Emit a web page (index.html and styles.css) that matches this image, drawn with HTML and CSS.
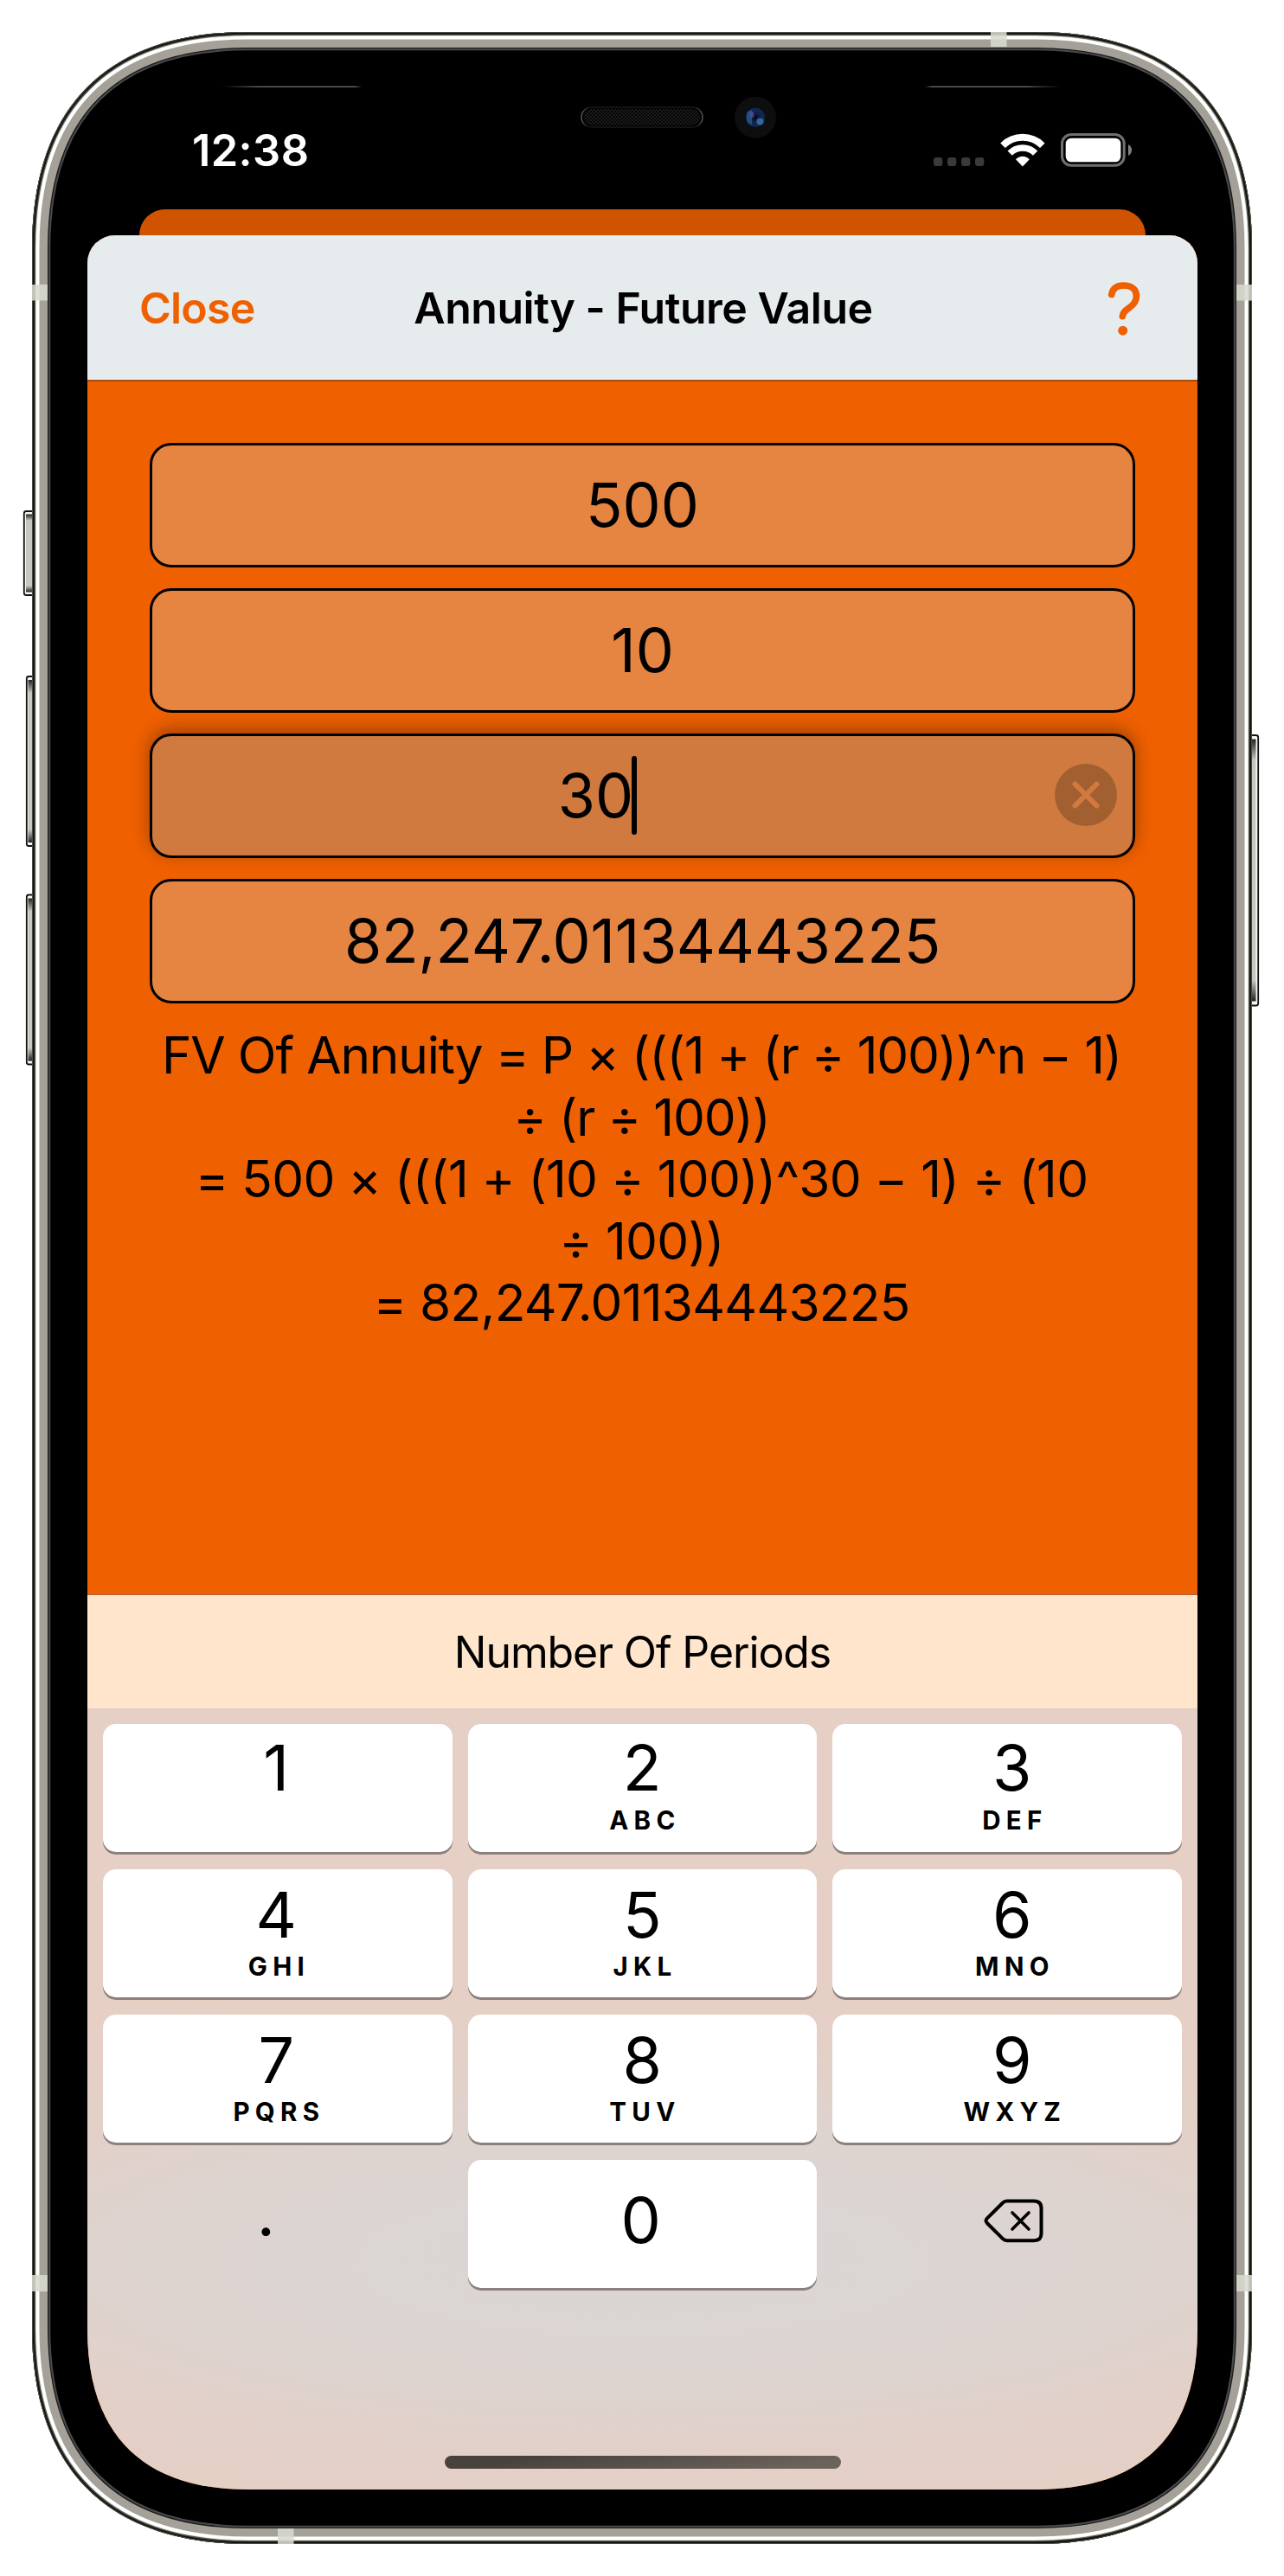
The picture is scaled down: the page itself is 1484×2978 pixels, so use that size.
FILE: index.html
```html
<!DOCTYPE html>
<html lang="en">
<head>
<meta charset="utf-8">
<title>Annuity - Future Value</title>
<link rel="stylesheet" href="styles.css">
</head>
<body>
<main class="phone">
  <svg class="frame" width="1484" height="2978" viewBox="0 0 1484 2978" aria-hidden="true">
    <defs>
      <path id="shell" d="M287 37H1197C1360 37 1447 124 1447 287V2691C1447 2854 1360 2941 1197 2941H287C124 2941 37 2854 37 2691V287C37 124 124 37 287 37Z"/>
      <clipPath id="shell-clip"><use href="#shell"/></clipPath>
      <linearGradient id="btn" x1="0" y1="0" x2="0" y2="1">
        <stop offset="0" stop-color="#222"/><stop offset=".08" stop-color="#c8c6c0"/>
        <stop offset=".92" stop-color="#c8c6c0"/><stop offset="1" stop-color="#222"/>
      </linearGradient>
      <linearGradient id="lineL"><stop offset="0" stop-color="#000"/><stop offset=".25" stop-color="#777"/><stop offset=".95" stop-color="#777"/><stop offset="1" stop-color="#000"/></linearGradient>
      <linearGradient id="lineR"><stop offset="0" stop-color="#000"/><stop offset=".05" stop-color="#777"/><stop offset=".75" stop-color="#777"/><stop offset="1" stop-color="#000"/></linearGradient>
      <linearGradient id="rim"><stop offset="0" stop-color="#666"/><stop offset=".06" stop-color="#181818"/><stop offset=".94" stop-color="#181818"/><stop offset="1" stop-color="#666"/></linearGradient>
      <pattern id="mesh" width="4" height="4" patternUnits="userSpaceOnUse"><rect width="4" height="4" fill="#050505"/><circle cx="1" cy="1" r=".9" fill="#262626"/><circle cx="3" cy="3" r=".9" fill="#262626"/></pattern>
      <radialGradient id="lens"><stop offset="0" stop-color="#050816"/><stop offset=".45" stop-color="#10224e"/><stop offset=".8" stop-color="#12294f"/><stop offset="1" stop-color="#04060a"/></radialGradient>
    </defs>
    <g stroke="#111" stroke-width="1.8" fill="#f4f6f0">
      <rect x="27.800" y="591" width="14" height="97" rx="2.500"/>
      <rect x="30.800" y="782" width="12" height="196" rx="2.500"/>
      <rect x="30.800" y="1034.500" width="12" height="196" rx="2.500"/>
      <rect x="1442" y="850" width="12.200" height="312.500" rx="2.500"/>
    </g>
    <g fill="url(#btn)">
      <rect x="30" y="594.500" width="9" height="90"/>
      <rect x="32.500" y="786" width="7" height="188"/>
      <rect x="32.500" y="1038.500" width="7" height="188"/>
      <rect x="1445" y="854.500" width="6.500" height="303"/>
    </g>
    <use href="#shell" fill="#000"/>
    <g clip-path="url(#shell-clip)" fill="none">
      <use href="#shell" stroke="#4a4a4c" stroke-width="42.500"/>
      <use href="#shell" stroke="#1c1c1c" stroke-width="38.500"/>
      <use href="#shell" stroke="#a5a199" stroke-width="36"/>
      <use href="#shell" stroke="#fff" stroke-width="17"/>
      <use href="#shell" stroke="#d5d6cf" stroke-width="9.500"/>
      <use href="#shell" stroke="#55554f" stroke-width="8"/>
      <use href="#shell" stroke="#15150f" stroke-width="5.500"/>
      <use href="#shell" stroke="#5c5b55" stroke-width="1.500"/>
    </g>
    <g fill="#d8d9ce" opacity=".88">
      <rect x="37" y="329" width="18" height="18.500"/><rect x="1429" y="329" width="18" height="18.500"/>
      <rect x="37" y="2630" width="18" height="19"/><rect x="1429" y="2630" width="18" height="19"/>
      <rect x="1145" y="37" width="18.500" height="17"/><rect x="321" y="2923" width="18.500" height="18"/>
    </g>
    <rect x="258" y="99.700" width="160" height="1.200" fill="url(#lineL)"/>
    <rect x="1069" y="99.700" width="157" height="1.200" fill="url(#lineR)"/>
    <rect x="672" y="124" width="140" height="23" rx="11.500" fill="#020202" stroke="url(#rim)" stroke-width="1.300"/>
    <rect x="675" y="126" width="134" height="19" rx="9.500" fill="url(#mesh)"/>
    <circle cx="873" cy="135.700" r="24" fill="#0e0e0e"/>
    <circle cx="873" cy="135.700" r="12.500" fill="url(#lens)"/>
    <path d="M864 129Q861 136 865 143L869 144V127Z" fill="#24598c" opacity=".8"/>
    <ellipse cx="869" cy="132.500" rx="2.500" ry="3.500" fill="#5b4a9a" opacity=".8"/>
    <ellipse cx="878.500" cy="140.500" rx="4" ry="4" fill="#3a78ad" opacity=".8"/>
  </svg>

  <div class="screen">
    <header class="status">
      <span class="time">12:38</span>
      <svg class="status-icons" width="230" height="44" viewBox="0 0 230 44" aria-label="Wi-Fi connected, battery full">
        <g fill="#3a3a3a"><rect x="0" y="30" width="10.300" height="10" rx="3"/><rect x="16" y="30" width="10.300" height="10" rx="3"/><rect x="32" y="30" width="10.300" height="10" rx="3"/><rect x="48" y="30" width="10.300" height="10" rx="3"/></g>
        <g fill="none" stroke="#fff">
          <path stroke-width="7.800" d="M80 16.200A32.500 32.500 0 0 1 125.800 16.200"/>
          <path stroke-width="7.500" d="M88.200 25.200A20.500 20.500 0 0 1 117.600 25.200"/>
        </g>
        <path fill="#fff" d="M102.900 40.400L95 32.300A10.500 10.500 0 0 1 110.800 32.300Z"/>
        <rect x="148.500" y="3.500" width="71.700" height="35.700" rx="10.500" fill="none" stroke="#707070" stroke-width="3"/>
        <rect x="152.700" y="7.700" width="63.600" height="27.600" rx="6.500" fill="#fff"/>
        <path fill="#808080" d="M225 15Q229 17.500 229 21.500T225 28Z"/>
      </svg>
    </header>
    <div class="back-card"></div>
    <section class="sheet">
      <nav class="nav">
        <span class="close">Close</span>
        <h1 class="title">Annuity - Future Value</h1>
        <svg class="help" width="38" height="64" viewBox="0 0 38 64" aria-label="Help">
          <path d="M4.700 16.500C6 9.500 11 6 18.500 6C27.500 6 33.500 10.500 33.500 18C33.500 24.500 30.500 28 25.500 31.500C19.500 35.500 17.300 38 17.300 41.800" fill="none" stroke="#ef6000" stroke-width="7.600" stroke-linecap="round"/>
          <circle cx="17.700" cy="58.200" r="5.500" fill="#ef6000"/>
        </svg>
      </nav>
      <div class="form">
        <div class="field">500</div>
        <div class="field">10</div>
        <div class="field focused">30<i class="caret"></i>
          <svg class="clear" width="72" height="72" viewBox="0 0 72 72" aria-label="Clear"><circle cx="36" cy="36" r="36" fill="#a26031"/><path d="M23.500 23.500L48.500 48.500M48.500 23.500L23.500 48.500" stroke="#d07a40" stroke-width="6" stroke-linecap="round"/></svg>
        </div>
        <div class="field result">82,247.01134443225</div>
        <p class="formula"><span class="general">FV Of Annuity = P × (((1 + (r ÷ 100))^n − 1)<br>÷ (r ÷ 100))</span><br><span class="filled">= 500 × (((1 + (10 ÷ 100))^30 − 1) ÷ (10<br>÷ 100))<br>= 82,247.01134443225</span></p>
      </div>
      <div class="accessory"><span>Number Of Periods</span></div>
      <div class="keypad">
        <div class="key top left"><b>1</b></div>
        <div class="key top"><b>2</b><small>ABC</small></div>
        <div class="key top right"><b>3</b><small>DEF</small></div>
        <div class="key left"><b>4</b><small>GHI</small></div>
        <div class="key"><b>5</b><small>JKL</small></div>
        <div class="key right"><b>6</b><small>MNO</small></div>
        <div class="key left"><b>7</b><small>PQRS</small></div>
        <div class="key"><b>8</b><small>TUV</small></div>
        <div class="key right"><b>9</b><small>WXYZ</small></div>
        <div class="key plain point"><b>.</b></div>
        <div class="key zero"><b>0</b></div>
        <div class="key plain">
          <svg class="delete" width="70" height="52" viewBox="0 0 70 52" aria-label="Delete"><g fill="none" stroke="#000" stroke-width="4" stroke-linecap="round" stroke-linejoin="round"><path d="M27 3.500H58Q66.500 3.500 66.500 12V41Q66.500 49.200 58 49.200H27Q24 49.200 22 47.200L3.800 29Q1.300 26.300 3.800 23.600L22 5.500Q24 3.500 27 3.500Z"/><path stroke-width="3.600" d="M33 17L52 36M52 17L33 36"/></g></svg>
        </div>
      </div>
      <div class="home"></div>
    </section>
  </div>
</main>
</body>
</html>
```
FILE: styles.css
```css
* { box-sizing: border-box; }

body {
  margin: 0;
  background: #fff;
  font-family: Inter, "Liberation Sans", sans-serif;
  color: #000;
}

.phone {
  position: relative;
  width: 1484px;
  height: 2978px;
  padding: 100px 100px 100px 101px;
}

.frame { position: absolute; inset: 0; }

.screen {
  position: relative;
  width: 1283px;
  height: 2778px;
  display: flex;
  flex-direction: column;
  clip-path: path("M0 0H1283V2593C1283 2714 1219 2778 1098 2778H185C64 2778 0 2714 0 2593Z");
}

.status {
  height: 142px;
  display: flex;
  justify-content: space-between;
  padding: 52px 75px 0 121px;
  color: #fff;
}

.time { font-size: 50.5px; line-height: 44px; font-weight: 600; letter-spacing: .4px; }

.back-card {
  height: 30px;
  margin: 0 60px;
  background: #d05400;
  border-radius: 30px 30px 0 0;
}

.sheet {
  flex: 1;
  display: flex;
  flex-direction: column;
  overflow: hidden;
  border-radius: 32px 32px 0 0;
  background: #ef6000;
}

.nav {
  height: 169px;
  display: grid;
  grid-template-columns: 200px 1fr 200px;
  align-items: center;
  padding: 0 60px;
  background: #e6ebee;
  border-bottom: 2px solid #a84a10;
  font-size: 50px;
}

.close { color: #ef6000; font-weight: 600; letter-spacing: -.8px; }
.title { margin: 0 0 0 2px; font-size: 50px; font-weight: 600; letter-spacing: -.48px; text-align: center; white-space: nowrap; }
.help { justify-self: end; margin-right: 6px; }

.form {
  height: 1402px;
  display: flex;
  flex-direction: column;
  gap: 24px;
  padding: 71px 72px 0;
}

.field {
  position: relative;
  flex: none;
  height: 144px;
  display: flex;
  align-items: center;
  justify-content: center;
  padding-bottom: 1px;
  border: 3px solid #000;
  border-radius: 25px;
  background: #e68442;
  font-size: 70px;
}

.result { letter-spacing: -.25px; }
.focused { padding-right: 104px; background: #d07a40; box-shadow: 0 -5px 20px rgba(0, 0, 0, .34); }
.caret { width: 6px; height: 91px; margin-left: -2px; border-radius: 3px; background: #000; }
.clear { position: absolute; right: 18px; top: 32px; }

.formula { margin: 0 2px 0 0; font-size: 58.5px; line-height: 71.6px; text-align: center; white-space: nowrap; }
.general { letter-spacing: -1.15px; }
.filled { letter-spacing: -.72px; }

.accessory {
  height: 132px;
  display: flex;
  align-items: center;
  justify-content: center;
  background: #ffe5cc;
  border-top: 1px solid #b06030;
  font-size: 50px;
  letter-spacing: -1.1px;
}

.keypad {
  flex: 1;
  display: grid;
  grid-template-columns: repeat(3, 1fr);
  grid-auto-rows: 147.5px;
  gap: 20.5px 18px;
  padding: 18px 18.5px 18px 18px;
  background: radial-gradient(ellipse 900px 235px at 50% 640px, #dad5d3 0%, #dbd5d3 35%, #ded3cf 68%, #e3d0c7 100%, #e6cfc5 140%);
}

.key {
  display: flex;
  flex-direction: column;
  align-items: center;
  padding-top: 26px;
  border-radius: 15px;
  background: #fff;
  box-shadow: 0 3px 0 #8b807c;
}

.key.left { padding-right: 3px; }
.key.right { padding-left: 12px; }
.key.top { padding-top: 24px; }
.key b { font-size: 73.5px; line-height: 54px; font-weight: 400; }
.key small { margin-top: 21px; font-size: 29.5px; line-height: 22px; font-weight: 700; letter-spacing: 6.3px; margin-right: -6.3px; }
.key.top small { margin-top: 22px; }
.key.zero { padding-top: 43px; padding-right: 3px; }
.key.plain { background: none; box-shadow: none; padding-top: 44px; }
.key.point { padding: 35px 27px 0 0; }
.delete { margin-left: 17px; }

.home {
  position: absolute;
  left: 413px;
  bottom: 24px;
  width: 458px;
  height: 15px;
  border-radius: 8px;
  background: linear-gradient(170deg, #48423d 20%, #6d635d 90%);
}
```
